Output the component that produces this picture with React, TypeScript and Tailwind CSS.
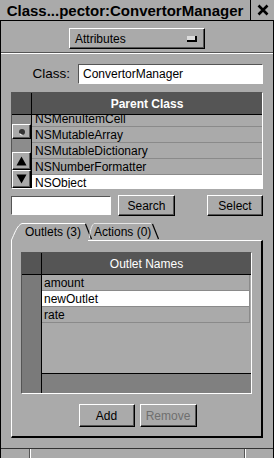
import React from "react";

const raised =
  "border border-t-white border-l-white border-b-black border-r-black shadow-[inset_-1px_-1px_0_#555555]";
const sunken = "border border-t-[#555555] border-l-[#555555] border-b-white border-r-white";

function Btn({ label, w, h, disabled }: { label: string; w: string; h: string; disabled?: boolean }) {
  return (
    <div className={`${w} ${h} ${raised} flex items-center justify-center bg-[#aaaaaa] ${disabled ? "text-[#6f6f6f]" : "text-black"}`}>
      {label}
    </div>
  );
}

function Arrow({ up }: { up?: boolean }) {
  return (
    <div className={`flex h-[18px] items-center justify-center bg-[#aaaaaa] ${raised}`}>
      <svg width="11" height="10" viewBox="0 0 11 10">
        <polygon points={up ? "5.5,0.5 10.5,9.5 0.5,9.5" : "0.5,0.5 10.5,0.5 5.5,9.5"} fill="#000" />
      </svg>
    </div>
  );
}

const classes = ["NSMenuItemCell", "NSMutableArray", "NSMutableDictionary", "NSNumberFormatter", "NSObject"];
const outlets = ["amount", "newOutlet", "rate"];

export default function App() {
  return (
    <div className="flex h-[458px] w-[274px] flex-col overflow-hidden bg-[#aaaaaa] font-['Liberation_Sans',Arial,sans-serif] text-[12px] leading-none text-black">
      {/* title bar */}
      <div className="flex h-[21px] shrink-0 border-b border-black">
        <div className="flex flex-1 items-center justify-center border-r border-black text-[15px] font-bold">
          Class...pector:ConvertorManager
        </div>
        <div className="flex w-[23px] items-center justify-center">
          <svg width="12" height="12" viewBox="0 0 12 12">
            <path d="M1.5 1.5 L10.5 10.5 M10.5 1.5 L1.5 10.5" stroke="#000" strokeWidth="2.6" />
          </svg>
        </div>
      </div>

      <div className="flex flex-1 flex-col border-x border-black">
        {/* popup */}
        <div className="mt-[7px] flex justify-center">
          <div className={`flex h-[21px] w-[136px] items-center justify-between pl-[5px] pr-[7px] ${raised}`}>
            <span>Attributes</span>
            <div className="h-[6px] w-[10px] border-b-2 border-r-2 border-black bg-[#dddddd]" />
          </div>
        </div>
        <div className="mt-[3px] h-[2px] border-t border-t-[#555555] border-b border-b-white" />

        {/* class field */}
        <div className="mt-[10px] flex items-center justify-end pr-[10px]">
          <span className="mr-[8px] text-[13.5px]">Class:</span>
          <div className={`flex h-[20px] w-[185px] items-center bg-white pl-[4px] ${sunken}`}>ConvertorManager</div>
        </div>

        {/* parent class table */}
        <div className="mx-[10px] mt-[8px]">
          <div className={`flex h-[97px] flex-col ${sunken}`}>
            <div className="flex h-[22px] shrink-0 border-b border-black">
              <div className="w-[20px] border-r border-black bg-[#555555]" />
              <div className="flex flex-1 items-center justify-center bg-[#555555] font-bold text-white">Parent Class</div>
            </div>
            <div className="flex flex-1">
              <div className="flex w-[20px] flex-col border-r border-black">
                <div className="flex h-[37px] flex-col bg-[#8c8c8c] pt-[9px]">
                  <div className={`flex h-[15px] items-center justify-center bg-[#aaaaaa] ${raised}`}>
                    <svg width="8" height="8" viewBox="0 0 8 8">
                      <circle cx="4" cy="4" r="3" fill="#333" />
                      <path d="M1.6 5.5 A3 3 0 0 0 4.5 7" stroke="#fff" strokeWidth="1.2" fill="none" />
                    </svg>
                  </div>
                </div>
                <Arrow up />
                <Arrow />
              </div>
              <div className="h-[73px] flex-1 overflow-hidden">
                <div className="-mt-[4px]">
                  {classes.map((c) => (
                    <div
                      key={c}
                      className={`flex h-[16px] items-center border-b border-[#8a8a8a] pl-[3px] text-[12px] ${c === "NSObject" ? "bg-white" : ""}`}
                    >
                      {c}
                    </div>
                  ))}
                </div>
              </div>
            </div>
          </div>
        </div>

        {/* search row */}
        <div className="mt-[6px] flex h-[21px] items-center px-[10px]">
          <div className={`h-[19px] w-[100px] bg-white ${sunken}`} />
          <div className="ml-[7px]">
            <Btn label="Search" w="w-[57px]" h="h-[21px]" />
          </div>
          <div className="ml-auto">
            <Btn label="Select" w="w-[56px]" h="h-[21px]" />
          </div>
        </div>

        {/* tabs */}
        <div className="relative mx-[10px] mt-[6px]">
          <div className="relative h-[18px]">
            <svg className="absolute inset-0" width="252" height="18" viewBox="0 0 252 18">
              <path d="M0.5 18 C3 13 6 3 11 1.5 L74 1.5" stroke="#fff" strokeWidth="1" fill="none" />
              <path d="M74.5 2 L80.5 17" stroke="#000" strokeWidth="1.2" fill="none" />
              <path d="M78.5 16 C79 10 80 4 83 1.5 L140 1.5" stroke="#e6e6e6" strokeWidth="1" fill="none" />
              <path d="M141.5 2 L147.5 17" stroke="#000" strokeWidth="1.2" fill="none" />
            </svg>
            <span className="absolute left-[14px] top-[4px]">Outlets (3)</span>
            <span className="absolute left-[83px] top-[4px]">Actions (0)</span>
          </div>
          <div className="relative h-[198px] border-l border-t border-l-white border-t-white border-r-2 border-b-2 border-r-black border-b-black">
            <div className="absolute -top-[1px] left-[0px] h-[1px] w-[76px] bg-[#aaaaaa]" />
            {/* outlet table */}
            <div className={`ml-[9px] mt-[11px] flex h-[142px] w-[231px] flex-col ${sunken}`}>
              <div className="flex h-[22px] shrink-0 border-b border-black">
                <div className="w-[20px] border-r border-black bg-[#555555]" />
                <div className="flex flex-1 items-center justify-center bg-[#555555] text-white">Outlet Names</div>
              </div>
              <div className="flex flex-1">
                <div className="w-[20px] border-r border-black bg-[#7a7a7a]" />
                <div className="flex flex-1 flex-col">
                  <div className="flex-1">
                    {outlets.map((o) => (
                      <div
                        key={o}
                        className={`mr-[1px] flex h-[16px] items-center border-b border-r border-[#8a8a8a] pl-[2px] ${o === "newOutlet" ? "bg-white" : ""}`}
                      >
                        {o}
                      </div>
                    ))}
                  </div>
                  <div className="h-[20px] border-t border-black bg-[#808080]" />
                </div>
              </div>
            </div>
            <div className="mt-[10px] flex justify-center gap-[5px] pl-[2px]">
              <Btn label="Add" w="w-[56px]" h="h-[23px]" />
              <Btn label="Remove" w="w-[57px]" h="h-[23px]" disabled />
            </div>
          </div>
        </div>

        {/* resize bar */}
        <div className="mt-auto flex h-[10px] border-t border-t-[#333333]">
          <div className="w-[29px] border-r border-r-[#555555]" />
          <div className="flex-1 border-l border-l-white border-r border-r-[#555555]" />
          <div className="w-[28px] border-l border-l-white" />
        </div>
      </div>
    </div>
  );
}
